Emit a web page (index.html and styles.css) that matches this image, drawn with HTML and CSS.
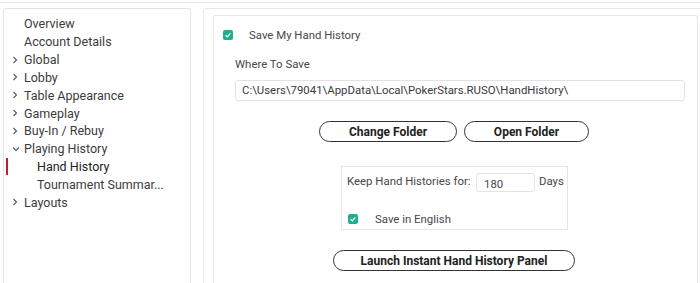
FILE: index.html
```html
<!DOCTYPE html>
<html lang="en">
<head>
  <meta charset="UTF-8">
  <title>Settings - Hand History</title>
  <link rel="stylesheet" href="styles.css">
</head>
<body>
  <div class="topline"></div>
  <div class="app">
    <!-- left navigation tree -->
    <nav class="nav">
      <div class="item"><span class="arrow"></span>Overview</div>
      <div class="item"><span class="arrow"></span>Account Details</div>
      <div class="item"><span class="arrow"><svg width="6" height="8" viewBox="0 0 6 8"><path d="M1.5 1 L4.5 4 L1.5 7" fill="none" stroke="#555" stroke-width="1.1"/></svg></span>Global</div>
      <div class="item"><span class="arrow"><svg width="6" height="8" viewBox="0 0 6 8"><path d="M1.5 1 L4.5 4 L1.5 7" fill="none" stroke="#555" stroke-width="1.1"/></svg></span>Lobby</div>
      <div class="item"><span class="arrow"><svg width="6" height="8" viewBox="0 0 6 8"><path d="M1.5 1 L4.5 4 L1.5 7" fill="none" stroke="#555" stroke-width="1.1"/></svg></span>Table Appearance</div>
      <div class="item"><span class="arrow"><svg width="6" height="8" viewBox="0 0 6 8"><path d="M1.5 1 L4.5 4 L1.5 7" fill="none" stroke="#555" stroke-width="1.1"/></svg></span>Gameplay</div>
      <div class="item"><span class="arrow"><svg width="6" height="8" viewBox="0 0 6 8"><path d="M1.5 1 L4.5 4 L1.5 7" fill="none" stroke="#555" stroke-width="1.1"/></svg></span>Buy-In / Rebuy</div>
      <div class="item"><span class="arrow"><svg width="8" height="6" viewBox="0 0 8 6"><path d="M1 1.5 L4 4.5 L7 1.5" fill="none" stroke="#555" stroke-width="1.1"/></svg></span>Playing History</div>
      <div class="item child active">Hand History</div>
      <div class="item child">Tournament Summar...</div>
      <div class="item"><span class="arrow"><svg width="6" height="8" viewBox="0 0 6 8"><path d="M1.5 1 L4.5 4 L1.5 7" fill="none" stroke="#555" stroke-width="1.1"/></svg></span>Layouts</div>
    </nav>

    <!-- settings content -->
    <div class="outer">
      <div class="inner">
        <label class="check-row">
          <span class="checkbox"><svg width="8" height="8" viewBox="0 0 8 8"><path d="M1.6 4.2 L3.3 5.8 L6.4 2.4" fill="none" stroke="#fff" stroke-width="1.2"/></svg></span>
          <span>Save My Hand History</span>
        </label>

        <div class="where">Where To Save</div>
        <div class="path">C:\Users\79041\AppData\Local\PokerStars.RUSO\HandHistory\</div>

        <div class="buttons">
          <button class="btn change">Change Folder</button>
          <button class="btn open">Open Folder</button>
        </div>

        <div class="keep-box">
          <div class="keep-row">
            <span class="keep-label">Keep Hand Histories for:</span>
            <span class="days-input">180</span>
            <span class="days">Days</span>
          </div>
          <label class="check-row small">
            <span class="checkbox"><svg width="8" height="8" viewBox="0 0 8 8"><path d="M1.6 4.2 L3.3 5.8 L6.4 2.4" fill="none" stroke="#fff" stroke-width="1.2"/></svg></span>
            <span>Save in English</span>
          </label>
        </div>

        <div class="launch-row">
          <button class="btn launch">Launch Instant Hand History Panel</button>
        </div>
      </div>
    </div>
  </div>
</body>
</html>
```

FILE: styles.css
```css
html, body {
  margin: 0;
  overflow: hidden;
}

body {
  width: 700px;
  height: 283px;
  background-color: #fff;
  font-family: Roboto, "Liberation Sans", sans-serif;
  color: #444;
}

.topline {
  height: 2px;
  border-bottom: 1px solid #e6e6e6;
}

.app {
  display: flex;
  gap: 12px;
  padding: 5px 0 0 3px;
}

/* left tree */
.nav {
  flex: none;
  width: 188px;
  height: 275px;
  border: 1px solid #e4e4e4;
  border-bottom: none;
  border-radius: 3px 3px 0 0;
  padding-top: 6px;
  box-sizing: border-box;
}

.item {
  display: flex;
  align-items: center;
  height: 17.85px;
  font-size: 12.5px;
  color: #3c3c3c;
  padding-left: 8px;
  position: relative;
}

.arrow {
  width: 12px;
  display: flex;
  justify-content: flex-start;
  align-items: center;
}

.child {
  padding-left: 33px;
}

.active {
  color: #222;
}

.active::before {
  content: "";
  position: absolute;
  left: 2px;
  top: 0;
  width: 2px;
  height: 17px;
  background-color: #b8233a;
}

/* right content */
.outer {
  flex: none;
  width: 507px;
  height: 275px;
  border: 1px solid #e8e8e8;
  border-bottom: none;
  border-radius: 3px 3px 0 0;
  box-sizing: border-box;
  padding: 6px 0 0 9px;
}

.inner {
  width: 485px;
  height: 268px;
  border: 1px solid #e6e6e6;
  border-bottom: none;
  border-radius: 3px 3px 0 0;
  box-sizing: border-box;
  padding: 12px 12px 0 9px;
  font-size: 11.4px;
  color: #484848;
}

.check-row {
  display: flex;
  align-items: center;
  gap: 16px;
}

.checkbox {
  width: 10px;
  height: 10px;
  border-radius: 2px;
  background-color: #1faf8e;
  display: flex;
  align-items: center;
  justify-content: center;
}

.where {
  margin: 15px 0 0 12px;
}

.path {
  margin: 9px 0 0 12px;
  height: 19px;
  line-height: 19px;
  border: 1px solid #e2e2e2;
  border-radius: 3px;
  padding-left: 6px;
  color: #3a3a3a;
}

.buttons {
  display: flex;
  gap: 7px;
  margin: 20px 0 0 96px;
}

.btn {
  font-family: Roboto, "Liberation Sans", sans-serif;
  font-weight: bold;
  font-size: 12px;
  color: #222;
  background-color: #fff;
  border: 1px solid #333;
  border-radius: 11px;
  height: 21px;
  padding: 0;
}

.change {
  width: 138px;
}

.open {
  width: 125px;
}

.keep-box {
  width: 227px;
  height: 64px;
  margin: 24px 0 0 118px;
  border: 1px solid #e6e6e6;
  box-sizing: border-box;
  padding: 6px 0 0 5px;
}

.keep-row {
  display: flex;
  align-items: center;
  white-space: nowrap;
}

.keep-label {
  width: 129px;
  margin-top: -3px;
}

.days-input {
  width: 59px;
  height: 19px;
  line-height: 21px;
  border: 1px solid #e4e4e4;
  border-radius: 3px;
  box-sizing: border-box;
  padding-left: 7px;
  margin-right: 4px;
}

.days {
  margin-top: -3px;
}

.check-row.small {
  height: 14px;
  margin-top: 20px;
  gap: 17px;
  padding-left: 1px;
}

.launch-row {
  margin: 20px 0 0 110px;
}

.launch {
  width: 242px;
}
```
